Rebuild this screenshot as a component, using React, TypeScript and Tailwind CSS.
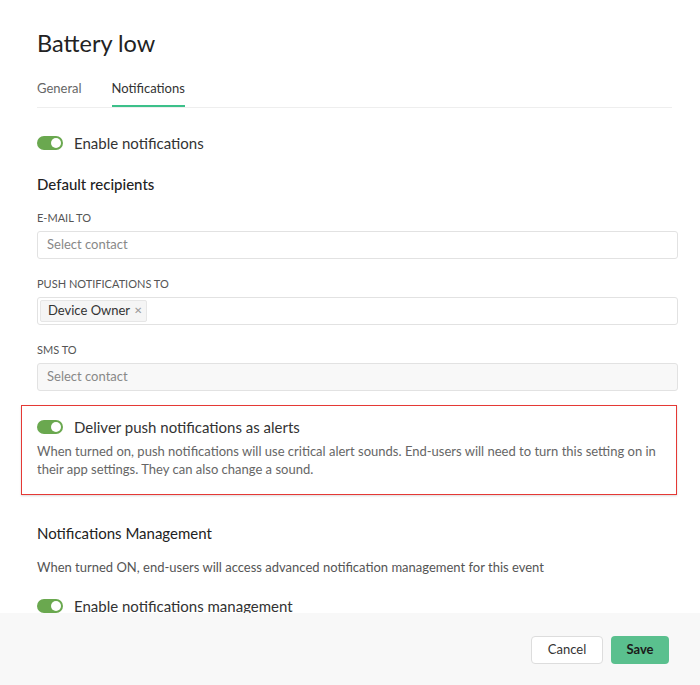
import React from "react";

function Toggle() {
  return (
    <div className="relative h-[14px] w-[26px] shrink-0 rounded-full bg-[#6aa84f]">
      <div className="absolute right-[2px] top-[2px] h-[10px] w-[10px] rounded-full bg-white" />
    </div>
  );
}

function Field({ label, children, disabled }: { label: string; children: React.ReactNode; disabled?: boolean }) {
  return (
    <div className="flex flex-col">
      <div className="text-[11px] leading-[14px] text-[#555] uppercase">{label}</div>
      <div
        className={`mt-[6px] flex h-[28px] w-[641px] items-center rounded-[3px] border border-[#e2e2e2] px-[2px] ${
          disabled ? "bg-[#f8f8f8]" : "bg-white"
        }`}
      >
        {children}
      </div>
    </div>
  );
}

export default function App() {
  return (
    <div
      className="flex h-[685px] w-[700px] flex-col overflow-hidden bg-white text-[#333]"
      style={{ fontFamily: 'Lato, "Noto Sans", sans-serif' }}
    >
      <div className="px-[37px] pt-[28px]">
        <div className="text-[23.5px] leading-[30px] text-[#222]">Battery low</div>
        <div className="mt-[21px] flex w-[635px] border-b border-[#eeeeee] text-[13px]">
          <div className="pb-[8px] text-[#666]">General</div>
          <div className="ml-[30px] border-b-2 border-[#3cc08a] pb-[6px] text-[#333]">Notifications</div>
        </div>
      </div>
      <div className="flex flex-1 overflow-hidden">
        <div className="flex flex-1 flex-col px-[37px] pt-[26px]">
          <div className="flex items-center gap-[11px]">
            <Toggle />
            <span className="text-[15px] leading-[18px]">Enable notifications</span>
          </div>
          <div className="mt-[23px] text-[15px] font-medium leading-[18px] text-[#222]">Default recipients</div>
          <div className="mt-[18px] flex flex-col gap-[18px]">
            <Field label="E-mail to">
              <span className="pl-[7px] text-[13px] text-[#888]">Select contact</span>
            </Field>
            <Field label="Push notifications to">
              <div className="flex h-[22px] items-center gap-[4px] rounded-[2px] border border-[#e6e6e6] bg-[#f5f5f5] pl-[7px] pr-[4px] text-[13px] text-[#333]">
                <span>Device Owner</span>
                <span className="text-[10px] text-[#999]">✕</span>
              </div>
            </Field>
            <Field label="SMS to" disabled>
              <span className="pl-[7px] text-[13px] text-[#888]">Select contact</span>
            </Field>
          </div>
          <div className="ml-[-16px] mt-[14px] w-[656px] border border-[#e53935] px-[15px] pb-[16px] pt-[12px] shadow-[0_1px_2px_rgba(0,0,0,0.15)]">
            <div className="flex items-center gap-[11px]">
              <Toggle />
              <span className="text-[15px] leading-[18px]">Deliver push notifications as alerts</span>
            </div>
            <div className="mt-[6px] text-[13px] leading-[18px] text-[#666]">
              When turned on, push notifications will use critical alert sounds. End-users will need to turn this
              setting on in their app settings. They can also change a sound.
            </div>
          </div>
          <div className="mt-[29px] text-[15px] leading-[18px] text-[#222]">Notifications Management</div>
          <div className="mt-[16px] text-[13px] leading-[18px] text-[#555]">
            When turned ON, end-users will access advanced notification management for this event
          </div>
          <div className="mt-[21px] flex items-center gap-[11px]">
            <Toggle />
            <span className="text-[15px] leading-[18px]">Enable notifications management</span>
          </div>
        </div>
        <div className="mt-[2px] mb-[8px] w-[1px] shrink-0 bg-[#d9d9d9] mr-[1px]" />
      </div>
      <div className="flex h-[72px] shrink-0 items-center justify-end gap-[8px] bg-[#f8f8f8] pr-[31px] pt-[2px]">
        <button className="h-[28px] w-[72px] rounded-[4px] border border-[#dddddd] bg-white text-[13px] text-[#333]">
          Cancel
        </button>
        <button className="h-[28px] w-[58px] rounded-[4px] bg-[#5ac08e] text-[13px] font-bold text-[#1a1a1a]">
          Save
        </button>
      </div>
    </div>
  );
}
